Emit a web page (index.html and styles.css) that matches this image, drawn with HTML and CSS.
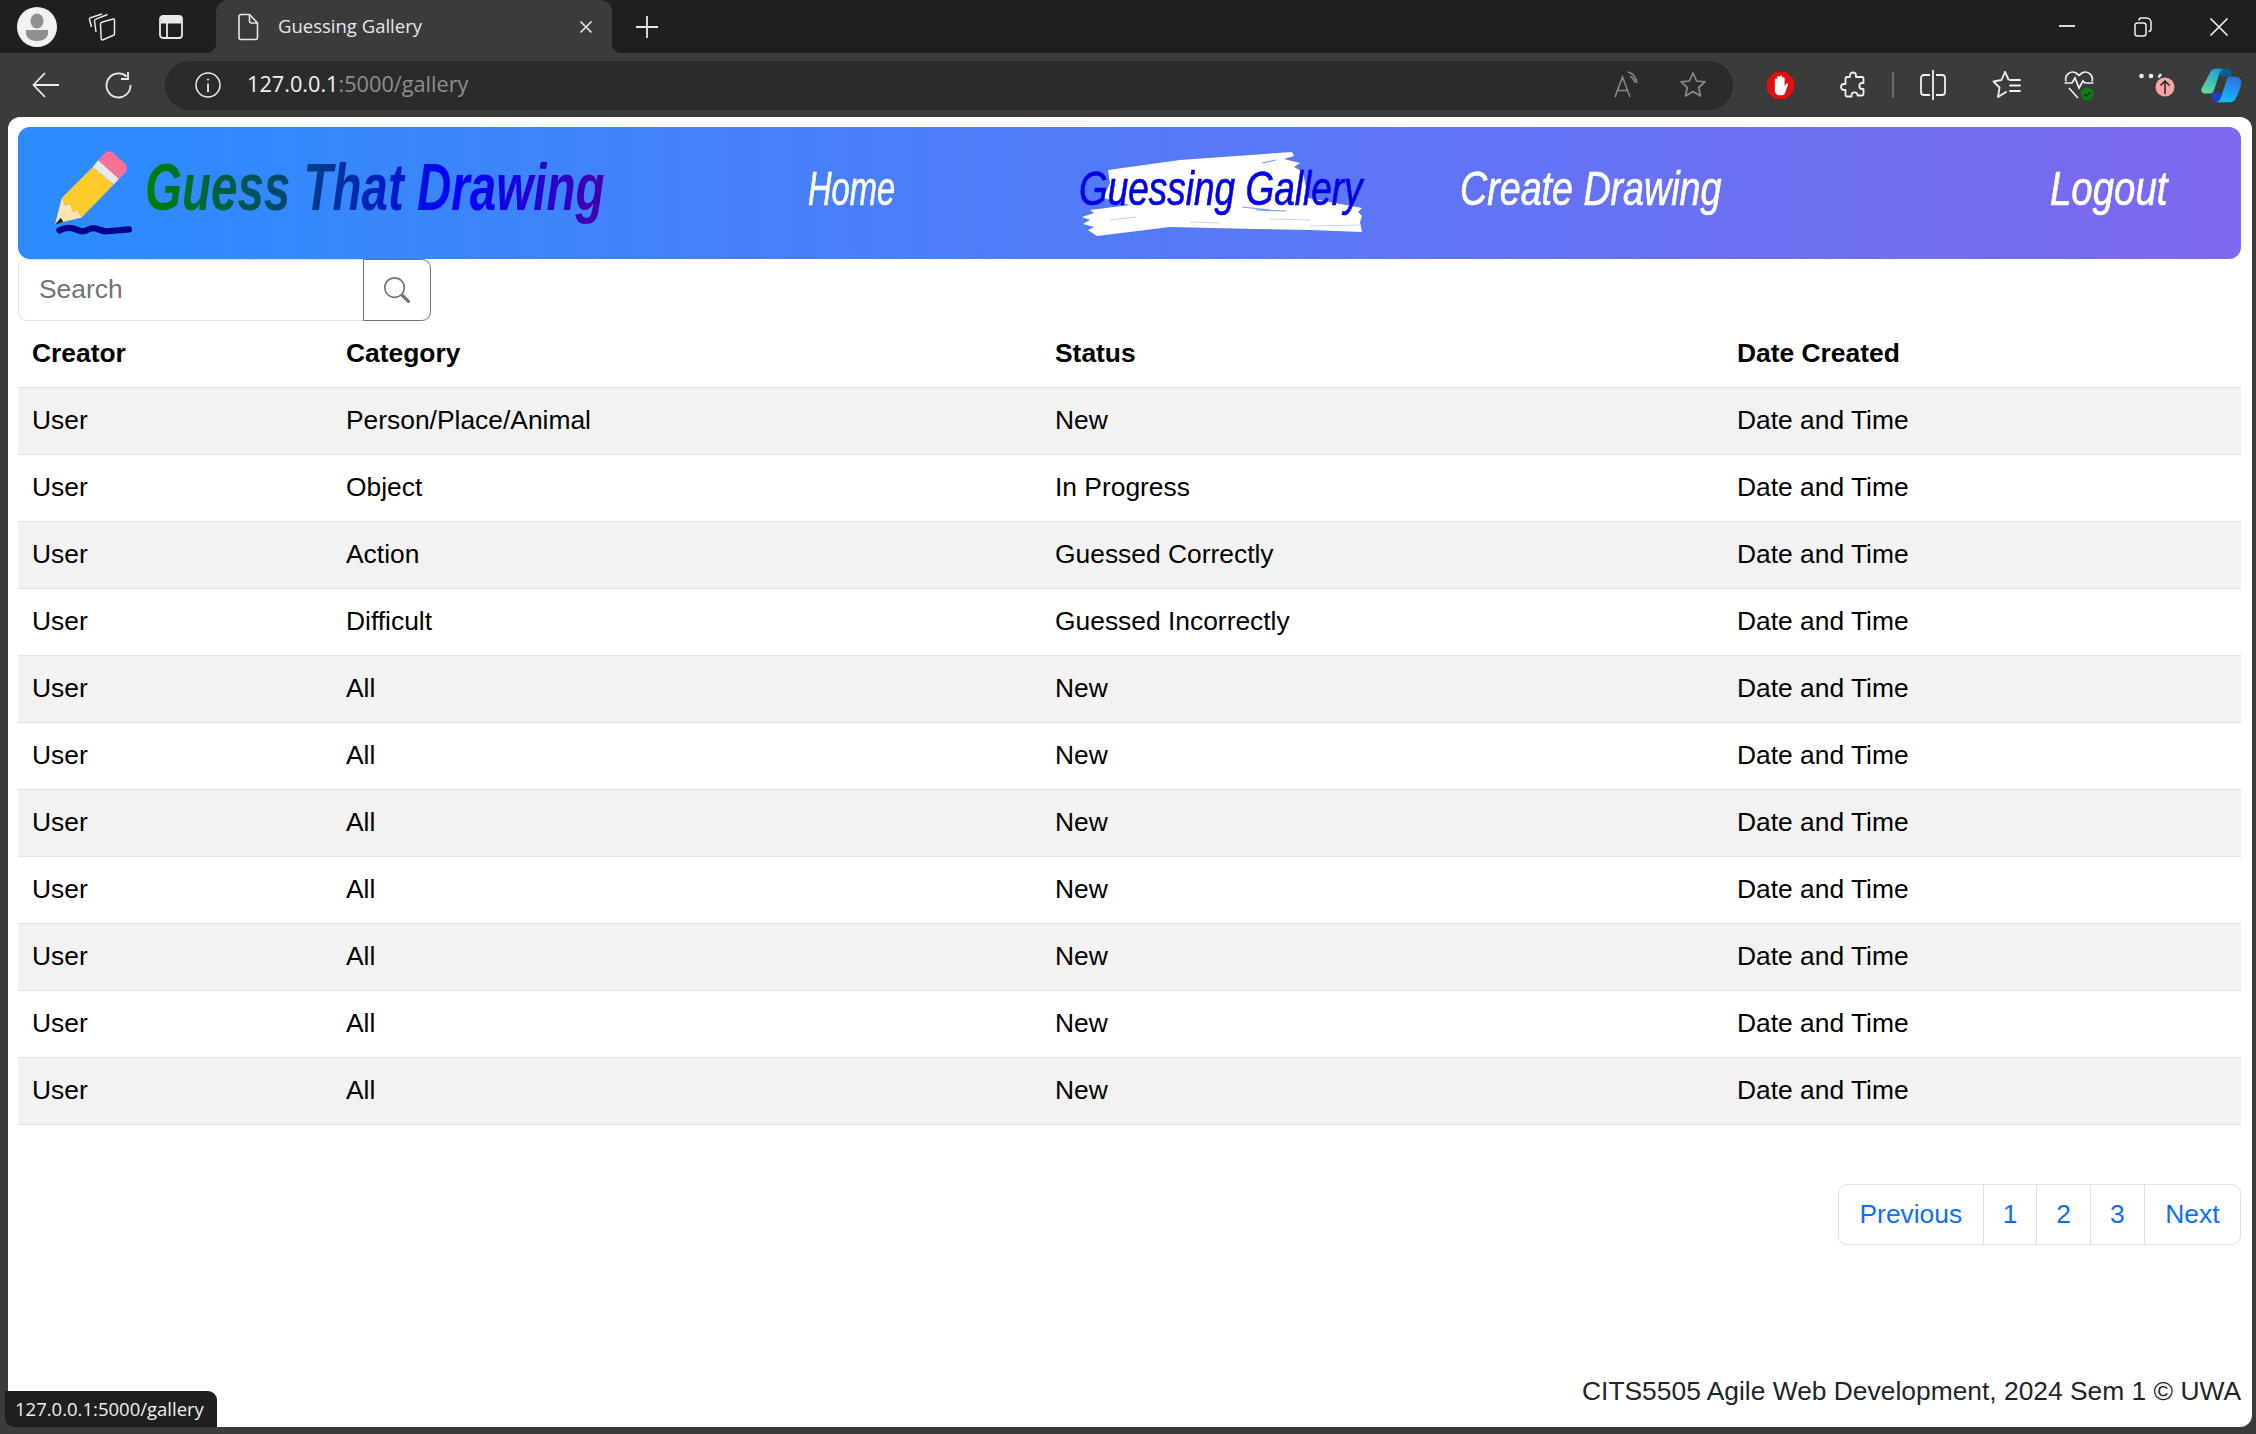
FILE: index.html
```html
<!DOCTYPE html>
<html lang="en">

<head>
    <meta charset="UTF-8">
    <title>Guessing Gallery</title>
    <link rel="stylesheet" href="styles.css">
</head>

<body>
    <div class="tabstrip">
        <div class="avatar">
            <svg width="42" height="42" viewBox="0 0 42 42">
                <circle cx="21" cy="21" r="20" fill="#f2f2f2" />
                <ellipse cx="21" cy="15" rx="6.5" ry="7.5" fill="#8f8f8f" />
                <path d="M10 24h22v3c0 5-5 8-11 8s-11-3-11-8z" fill="#8f8f8f" />
            </svg>
        </div>
        <div class="strip-btn strip-collections">
            <svg width="28" height="28" viewBox="0 0 28 28" fill="none" stroke="#e8e8e8" stroke-width="1.500" stroke-linejoin="round">
                <path d="M14.500 27c-.8 0-1.300-.4-1.300-1.200L12.500 11c0-.8.4-1.400 1.200-1.700L25 6c.8-.2 1.500.3 1.500 1.200v13.500c0 .8-.4 1.300-1.100 1.600z" />
                <path d="M8 19 6.500 8c0-.8.3-1.300 1-1.600L19.500 1.500" />
                <path d="M3.500 14 1.500 6.500c-.2-.8.1-1.400.9-1.700L14 1" />
            </svg>
        </div>
        <div class="strip-btn strip-vertical">
            <svg width="26" height="26" viewBox="0 0 26 26" fill="none" stroke="#e8e8e8" stroke-width="1.800">
                <rect x="2" y="2" width="22" height="22" rx="3" />
                <path d="M2 8.500h22M9 8.500V24" />
                <path d="M3 3h20v5H3z" fill="#e8e8e8" stroke="none" />
            </svg>
        </div>
        <div class="tab">
            <svg width="22" height="28" viewBox="0 0 22 28" fill="none" stroke="#e8e8e8" stroke-width="1.600" stroke-linejoin="round">
                <path d="M4 1.500h8.500L20.500 10v14.500a2 2 0 0 1-2 2H4a2 2 0 0 1-2-2v-21a2 2 0 0 1 2-2z" />
                <path d="M12.500 1.500V8a2 2 0 0 0 2 2h6" />
            </svg>
            <span class="tab-title">Guessing Gallery</span>
            <svg class="tab-close" width="14" height="14" viewBox="0 0 14 14" stroke="#e8e8e8" stroke-width="1.600">
                <path d="M1.500 1.500l11 11M12.500 1.500l-11 11" />
            </svg>
        </div>
        <div class="strip-btn strip-plus">
            <svg width="24" height="24" viewBox="0 0 24 24" stroke="#e8e8e8" stroke-width="1.800">
                <path d="M12 1v22M1 12h22" />
            </svg>
        </div>
        <div class="window-controls">
            <div class="win-btn">
                <svg width="18" height="18" viewBox="0 0 18 18" stroke="#f0f0f0" stroke-width="1.800">
                    <path d="M1 9h16" />
                </svg>
            </div>
            <div class="win-btn">
                <svg width="18" height="20" viewBox="0 0 18 20" fill="none" stroke="#f0f0f0" stroke-width="1.500">
                    <rect x="1" y="6" width="11" height="13" rx="2.500" />
                    <path d="M5 3.500C5 2 6 1 7.500 1h5C15 1 17 3 17 5.500v6.500c0 1.500-1 2.500-2.500 2.500" />
                </svg>
            </div>
            <div class="win-btn">
                <svg width="20" height="20" viewBox="0 0 20 20" stroke="#f0f0f0" stroke-width="1.700">
                    <path d="M1.500 1.500l17 17M18.500 1.500l-17 17" />
                </svg>
            </div>
        </div>
    </div>

    <div class="toolbar">
        <div class="tool-btn">
            <svg width="28" height="28" viewBox="0 0 28 28" fill="none" stroke="#ececec" stroke-width="1.800">
                <path d="M27 14H2M13 2 1.500 14 13 26" />
            </svg>
        </div>
        <div class="tool-btn">
            <svg width="28" height="28" viewBox="0 0 28 28" fill="none" stroke="#ececec" stroke-width="1.800">
                <path d="M22.500 5.500A12 12 0 1 0 26.500 14" />
                <path d="M24 1v7h-7" />
            </svg>
        </div>
        <div class="address-bar">
            <svg width="26" height="26" viewBox="0 0 26 26" fill="none" stroke="#ececec" stroke-width="1.500">
                <circle cx="13" cy="13" r="12" />
                <path d="M13 11.500V20" stroke-width="1.800" />
                <circle cx="13" cy="7.500" r="1" fill="#ececec" stroke="none" />
            </svg>
            <span class="url"><span class="url-host">127.0.0.1</span>:5000/gallery</span>
            <svg class="read-aloud" width="30" height="30" viewBox="0 0 30 30" fill="none" stroke="#8a8a8a" stroke-width="1.500">
                <path d="M3 27 10.500 7 18 27M5.500 20.500h10" />
                <path d="M16 2c5 1.500 8 5 9 11M18 6.500c2.500 1 4 3 5 6" />
            </svg>
            <svg class="fav-star" width="28" height="28" viewBox="0 0 28 28" fill="none" stroke="#8a8a8a" stroke-width="1.700" stroke-linejoin="round">
                <path d="M14 2l3.600 8 8.400.800-6.300 5.700 1.800 8.500L14 20.500 6.500 25l1.800-8.500L2 10.800l8.400-.8z" />
            </svg>
        </div>
        <div class="tool-btn tool-adblock">
            <svg width="29" height="29" viewBox="0 0 28 28">
                <path d="M8.500 1h11L27 8.500v11L19.500 27h-11L1 19.500v-11z" fill="#e20f0f" />
                <path d="M8.500 14V8.500a1.200 1.200 0 0 1 2.400 0V13V6a1.200 1.200 0 0 1 2.400 0v7V5.500a1.200 1.200 0 0 1 2.400 0V13V7a1.200 1.200 0 0 1 2.300 0v8l1.400-2.500c.8-1 2.200-.3 1.700.9L18.500 21c-.8 1.600-1.700 2.500-4 2.500-3.500 0-6-1.500-6-5z" fill="#fff" />
            </svg>
        </div>
        <div class="tool-btn tool-puzzle">
            <svg width="28" height="28" viewBox="0 0 28 28" fill="none" stroke="#f0f0f0" stroke-width="1.800" stroke-linejoin="round">
                <path d="M11 4.500c0-4 6-4 6 0v1.500h6a1.500 1.500 0 0 1 1.500 1.500v4.500H23c-3.500 0-3.500 6 0 6h1.500v5a1.500 1.500 0 0 1-1.500 1.500h-4.500V24c0-3.500-6-3.500-6 0v1.500H8A1.500 1.500 0 0 1 6.500 24v-5H5c-4 0-4-6 0-6h1.500V7.500A1.500 1.500 0 0 1 8 6h3z" />
            </svg>
        </div>
        <div class="tool-divider"></div>
        <div class="tool-btn tool-split">
            <svg width="28" height="32" viewBox="0 0 28 32" fill="none" stroke="#f0f0f0" stroke-width="1.800">
                <path d="M14 1v30" />
                <path d="M11 6H5a3 3 0 0 0-3 3v14a3 3 0 0 0 3 3h6M17 6h6a3 3 0 0 1 3 3v14a3 3 0 0 1-3 3h-6" />
            </svg>
        </div>
        <div class="tool-btn tool-favs">
            <svg width="30" height="30" viewBox="0 0 30 30" fill="none" stroke="#f0f0f0" stroke-width="1.800" stroke-linejoin="round" stroke-linecap="round">
                <path d="M13 2 9.500 10 1.500 11.500 7.500 17.500 6 27 14 22" />
                <path d="M13 2l3.500 7.500" />
                <path d="M18 10h10M18 15.500h10M18 21h10" />
            </svg>
        </div>
        <div class="tool-btn tool-heart">
            <svg width="32" height="32" viewBox="0 0 32 32" fill="none" stroke="#f0f0f0" stroke-width="1.700">
                <path d="M3 12.500C1 6 8 1 13 4l3 2.500L19 4c5-3 12 2 10 8.500" />
                <path d="M1.500 14H9l3-5 4 10 4-7 2 2h8.500" />
                <path d="M6 19l9 10" />
                <circle cx="24" cy="25" r="6.500" fill="#0f7b1a" stroke="none" />
                <path d="M21 25l2.200 2.200 4-4" stroke="#123" stroke-width="1.300" />
            </svg>
        </div>
        <div class="tool-btn tool-more">
            <svg width="36" height="36" viewBox="0 0 36 36">
                <circle cx="2.500" cy="9" r="2.300" fill="#f0f0f0" />
                <circle cx="12" cy="9" r="2.300" fill="#f0f0f0" />
                <path d="M19.500 10.500l2.500-3.500" stroke="#f0f0f0" stroke-width="2.500" />
                <circle cx="26" cy="20" r="9.500" fill="#f4a6a2" />
                <path d="M26 27V14M21.500 18.500 26 14l4.500 4.500" fill="none" stroke="#222" stroke-width="1.500" />
            </svg>
        </div>
        <div class="tool-btn tool-copilot">
            <svg width="40" height="35" viewBox="0 0 120 104">
                <defs>
                    <linearGradient id="copilotLeft" x1="0.700" y1="0" x2="0.200" y2="1">
                        <stop offset="0" stop-color="#16a0e4" />
                        <stop offset="1" stop-color="#66dc8c" />
                    </linearGradient>
                    <linearGradient id="copilotRight" x1="0.700" y1="0" x2="0.400" y2="1">
                        <stop offset="0" stop-color="#2c6fe2" />
                        <stop offset="1" stop-color="#17bdf4" />
                    </linearGradient>
                </defs>
                <path d="M50 2h28c8 0 14 6 16 24H60z" fill="#0e5c8a" />
                <path d="M30 74h45l-10 28H48c-10 0-16-10-18-28z" fill="#1d3fc4" />
                <path d="M28 12C31 5 38 2 46 2h26c-10 0-14 6-17 15L39 66c-2 7-7 10-14 10H12C3 76-1 68 2 60z" fill="url(#copilotLeft)" />
                <path d="M84 26h21c10 0 15 7 15 15 0 18-8 36-16 50-4 8-10 11-19 11H42c10 0 15-6 18-15l16-48c1-6 4-13 8-13z" fill="url(#copilotRight)" />
            </svg>
        </div>
    </div>

    <div class="viewport">
        <nav class="navbar">
            <svg class="brand-logo" width="78" height="86" viewBox="45 30 235 260">
                <path d="M192 40c8-10 18-12 26-6l38 34c8 8 8 18 2 26l-20 21-63-57z" fill="#fb6f97" />
                <path d="M175 58l63 57-16 16-64-52z" fill="#e8e8e8" />
                <path d="M158 79l64 52-97 100-13-21-12 5-10-25-15 5-10-23z" fill="#ffcb2b" />
                <path d="M65 172l10 23 15-5 10 25 12-5 13 21-80 20z" fill="#fde4b0" />
                <path d="M45 252l17-20 8 13z" fill="#222" />
                <path d="M58 270c15-8 28-10 42-6 12 4 22 12 34 8s20-12 34-8 24 12 40 8l60-5" fill="none" stroke="#00008b" stroke-width="19" stroke-linecap="round" />
            </svg>
            <div class="brand-cell"><span class="brand-title">Guess That Drawing</span></div>
            <div class="nav-cell"><a class="nav-link nav-home">Home</a></div>
            <div class="nav-cell nav-active">
                <svg class="brush" width="300" height="100" viewBox="0 0 300 100">
                    <path d="M38 30 110 20 222 12 224 16 214 19 230 23 224 27 233 32 238 58 292 68 288 72 292 76 290 82 292 92 240 90 186 89 100 87 27 96 18 90 24 87 13 84 20 80 12 77 24 73 20 70 60 65 33 58 40 43z" fill="#fff" />
                    <path d="M172 67l28 3M186 70l30 1M192 23l14-3" stroke="#7f9bf3" stroke-width="1.200" fill="none" />
                    <path d="M200 79l40 1M120 82l30 1M240 86l50-1M40 80l26-3" stroke="#c4d2fa" stroke-width="1" fill="none" />
                </svg>
                <a class="nav-link nav-gallery">Guessing Gallery</a>
            </div>
            <div class="nav-cell"><a class="nav-link nav-create">Create Drawing</a></div>
            <div class="nav-cell"><a class="nav-link nav-logout">Logout</a></div>
        </nav>

        <form class="search">
            <input class="search-input" type="text" placeholder="Search">
            <button class="search-btn" type="button">
                <svg width="26" height="26" viewBox="0 0 16 16" fill="#6c757d">
                    <path d="M11.742 10.344a6.500 6.500 0 1 0-1.397 1.398h-.001c.03.04.062.078.098.115l3.850 3.850a1 1 0 0 0 1.415-1.414l-3.850-3.850a1.007 1.007 0 0 0-.115-.1zM12 6.500a5.500 5.500 0 1 1-11 0 5.500 5.500 0 0 1 11 0z" />
                </svg>
            </button>
        </form>

        <table class="gallery-table">
            <thead>
                <tr>
                    <th class="col-creator">Creator</th>
                    <th class="col-category">Category</th>
                    <th class="col-status">Status</th>
                    <th>Date Created</th>
                </tr>
            </thead>
            <tbody>
                <tr><td>User</td><td>Person/Place/Animal</td><td>New</td><td>Date and Time</td></tr>
                <tr><td>User</td><td>Object</td><td>In Progress</td><td>Date and Time</td></tr>
                <tr><td>User</td><td>Action</td><td>Guessed Correctly</td><td>Date and Time</td></tr>
                <tr><td>User</td><td>Difficult</td><td>Guessed Incorrectly</td><td>Date and Time</td></tr>
                <tr><td>User</td><td>All</td><td>New</td><td>Date and Time</td></tr>
                <tr><td>User</td><td>All</td><td>New</td><td>Date and Time</td></tr>
                <tr><td>User</td><td>All</td><td>New</td><td>Date and Time</td></tr>
                <tr><td>User</td><td>All</td><td>New</td><td>Date and Time</td></tr>
                <tr><td>User</td><td>All</td><td>New</td><td>Date and Time</td></tr>
                <tr><td>User</td><td>All</td><td>New</td><td>Date and Time</td></tr>
                <tr><td>User</td><td>All</td><td>New</td><td>Date and Time</td></tr>
            </tbody>
        </table>

        <div class="pagination">
            <a class="page-item">Previous</a>
            <a class="page-item page-num">1</a>
            <a class="page-item page-num">2</a>
            <a class="page-item page-num">3</a>
            <a class="page-item">Next</a>
        </div>

        <footer class="footer">CITS5505 Agile Web Development, 2024 Sem 1 © UWA</footer>

        <div class="status-tip">127.0.0.1:5000/gallery</div>
    </div>
</body>

</html>
```

FILE: styles.css
```css
body {
    margin: 0;
    width: 2256px;
    height: 1434px;
    display: flex;
    flex-direction: column;
    overflow: hidden;
    background: #3b3b3b;
    font-family: 'Liberation Sans', Arial, sans-serif;
    color: #000;
}

/* browser chrome */
.tabstrip {
    height: 53px;
    flex: none;
    display: flex;
    align-items: center;
    background: #1f1f1f;
}

.avatar {
    display: flex;
    margin: 0 0 0 16px;
}

.strip-btn {
    display: flex;
    justify-content: center;
    align-items: center;
}

.strip-collections {
    width: 44px;
    margin-left: 22px;
}

.strip-vertical {
    width: 44px;
    margin-left: 25px;
}

.tab {
    position: relative;
    width: 396px;
    height: 53px;
    margin-left: 23px;
    padding: 0 19px 0 21px;
    box-sizing: border-box;
    display: flex;
    align-items: center;
    background: #3b3b3b;
    border-radius: 12px 12px 0 0;
}

.tab::before,
.tab::after {
    content: "";
    position: absolute;
    bottom: 0;
    width: 10px;
    height: 10px;
}

.tab::before {
    left: -10px;
    background: radial-gradient(circle at 0 0, transparent 10px, #3b3b3b 10.500px);
}

.tab::after {
    right: -10px;
    background: radial-gradient(circle at 100% 0, transparent 10px, #3b3b3b 10.500px);
}

.tab-title {
    margin-left: 19px;
    padding-bottom: 2px;
    font-family: 'Open Sans', sans-serif;
    font-size: 18.500px;
    color: #e8e8e8;
}

.tab-close {
    margin-left: auto;
}

.strip-plus {
    width: 24px;
    margin-left: 23px;
}

.window-controls {
    margin-left: auto;
    margin-right: -1px;
    display: flex;
}

.win-btn {
    width: 76px;
    display: flex;
    justify-content: center;
}

.toolbar {
    height: 64px;
    flex: none;
    padding-left: 10px;
    display: flex;
    align-items: center;
    overflow: hidden;
}

.tool-btn {
    width: 72px;
    flex: none;
    display: flex;
    justify-content: center;
    align-items: center;
}

.address-bar {
    width: 1568px;
    height: 49px;
    flex: none;
    margin: 0 12px 0 11px;
    padding: 0 26px 0 30px;
    box-sizing: border-box;
    display: flex;
    align-items: center;
    background: #2b2b2b;
    border-radius: 25px;
}

.url {
    margin-left: 26px;
    padding-bottom: 3px;
    font-family: 'Open Sans', sans-serif;
    font-size: 21.700px;
    color: #8f8f8f;
}

.url-host {
    color: #f2f2f2;
}

.read-aloud {
    margin-left: auto;
}

.fav-star {
    margin-left: 37px;
}

.tool-divider {
    width: 2px;
    height: 26px;
    flex: none;
    margin: 0 3px 0 3px;
    background: #6a6a6a;
}

.tool-adblock {
    margin-left: -1px;
    margin-right: 1px;
}

.tool-favs {
    margin-left: 2px;
    margin-right: 0;
}

.tool-heart {
    margin-right: -1px;
}

.tool-more {
    margin-left: 7px;
    margin-right: -7px;
}

.tool-copilot {
    margin-left: -1px;
}

/* page */
.viewport {
    position: relative;
    flex: 1;
    margin: 0 4px 7px 8px;
    padding: 10px 11px 0 10px;
    display: flex;
    flex-direction: column;
    background: #fff;
    border-radius: 12px;
}

.navbar {
    height: 132px;
    flex: none;
    box-sizing: border-box;
    padding: 0 0 8px 37px;
    display: grid;
    grid-template-columns: 90px 663px 271px 381px 590px 1fr;
    align-items: center;
    background: linear-gradient(90deg, #2b8cff, #7d68ee);
    border-radius: 12px;
}

.brand-logo {
    margin-top: 10px;
}

.brand-cell {
    margin-bottom: 4px;
}

.brand-title {
    display: inline-block;
    font-size: 66px;
    font-weight: bold;
    font-style: italic;
    line-height: 80px;
    white-space: nowrap;
    transform: scaleX(.72);
    transform-origin: left center;
    background: linear-gradient(90deg, #008000 0%, #0000ff 68%, #4400aa 100%);
    -webkit-background-clip: text;
    background-clip: text;
    color: transparent;
}

.nav-cell {
    position: relative;
    white-space: nowrap;
}

.nav-link {
    position: relative;
    display: inline-block;
    font-size: 48px;
    font-style: italic;
    line-height: 60px;
    color: #fff;
    -webkit-text-stroke: .7px currentColor;
    transform-origin: left center;
}

.nav-home {
    transform: scaleX(.68);
}

.nav-gallery {
    color: #0000e6;
    transform: scaleX(.77);
}

.nav-create {
    transform: scaleX(.784);
}

.nav-logout {
    transform: scaleX(.8);
}

.brush {
    position: absolute;
    left: -9px;
    top: -19px;
}

.search {
    display: flex;
    flex: none;
    margin: 0;
}

.search-input {
    width: 345px;
    height: 62px;
    padding: 0 21px 1px 20px;
    box-sizing: border-box;
    border: 1px solid #dee2e6;
    border-right: none;
    border-radius: 9px 0 0 9px;
    font-family: inherit;
    font-size: 26.400px;
    outline: none;
}

.search-input::placeholder {
    color: #6c757d;
}

.search-btn {
    width: 68px;
    height: 62px;
    padding: 0;
    display: flex;
    justify-content: center;
    align-items: center;
    background: #fff;
    border: 1px solid #6c757d;
    border-radius: 0 9px 9px 0;
}

.gallery-table {
    width: 100%;
    flex: none;
    border-collapse: collapse;
    table-layout: fixed;
    font-size: 26.400px;
    line-height: 39px;
}

.gallery-table th,
.gallery-table td {
    padding: 12.500px 14px 14.500px;
    text-align: left;
    border-bottom: 1px solid #dee2e6;
}

.col-creator {
    width: 286px;
}

.col-category {
    width: 681px;
}

.col-status {
    width: 654px;
}

.gallery-table tbody tr:nth-child(odd) {
    background: #f2f2f2;
}

.pagination {
    align-self: flex-end;
    display: flex;
    margin-top: 59px;
    font-size: 26.400px;
    line-height: 39px;
    border: 1px solid #dee2e6;
    border-radius: 9px;
}

.page-item {
    padding: 10px 20.500px;
    color: #0d6efd;
    border-left: 1px solid #dee2e6;
}

.page-item:first-child {
    border-left: none;
}

.page-num {
    padding: 10px 19px;
}

.footer {
    margin-top: auto;
    padding-bottom: 16px;
    text-align: right;
    font-size: 26.400px;
    line-height: 39px;
    color: #212529;
}

.status-tip {
    position: absolute;
    left: -3px;
    bottom: 0;
    height: 36px;
    box-sizing: border-box;
    padding: 0 13px 2px 10px;
    display: flex;
    align-items: center;
    font-family: 'Open Sans', sans-serif;
    font-size: 18.500px;
    color: #f0f0f0;
    background: #1f1f1f;
    border-radius: 0 9px 0 9px;
}
```
